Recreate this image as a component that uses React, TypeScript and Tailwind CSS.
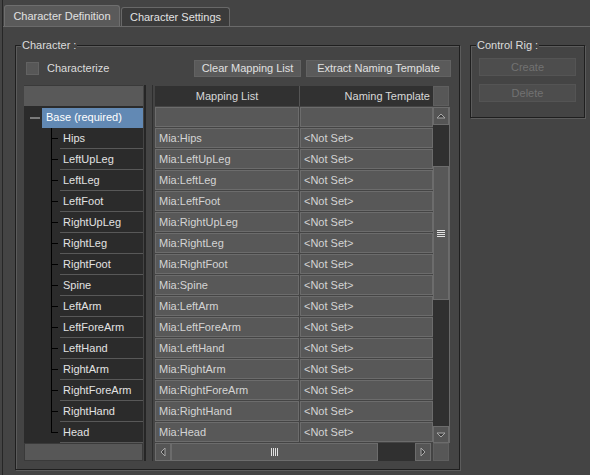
import React from "react";

const bones = [
  "Hips",
  "LeftUpLeg",
  "LeftLeg",
  "LeftFoot",
  "RightUpLeg",
  "RightLeg",
  "RightFoot",
  "Spine",
  "LeftArm",
  "LeftForeArm",
  "LeftHand",
  "RightArm",
  "RightForeArm",
  "RightHand",
  "Head",
];

function Arrow({ dir }: { dir: "up" | "down" | "left" | "right" }) {
  const pts = {
    up: "1,6 5,2 9,6",
    down: "1,2 5,6 9,2",
    left: "6,1 2,5 6,9",
    right: "2,1 6,5 2,9",
  }[dir];
  const vertical = dir === "up" || dir === "down";
  return (
    <svg width={vertical ? 10 : 8} height={vertical ? 8 : 10} viewBox={vertical ? "0 0 10 8" : "0 0 8 10"}>
      <polygon points={pts} fill="#3c3c3c" stroke="#a8a8a8" strokeWidth="1" />
    </svg>
  );
}

function Grip({ vertical }: { vertical?: boolean }) {
  return (
    <svg width={vertical ? 8 : 7} height={vertical ? 7 : 8}>
      {[0, 2, 4, 6].map((o) =>
        vertical ? (
          <rect key={o} x={0} y={o} width={8} height={1} fill="#e0e0e0" />
        ) : (
          <rect key={o} x={o} y={0} width={1} height={8} fill="#e0e0e0" />
        )
      )}
    </svg>
  );
}

function GroupBox({ label, className, children }: { label: string; className: string; children: React.ReactNode }) {
  return (
    <div className={`relative border border-[#1f1f1f] shadow-[inset_1px_1px_0_#5c5c5c,1px_1px_0_#5c5c5c] ${className}`}>
      <span className="absolute -top-[7px] left-[5px] bg-[#444] px-[1px] leading-[13px] text-[#dcdcdc]">{label}</span>
      {children}
    </div>
  );
}

export default function App() {
  return (
    <div className="w-[590px] h-[475px] overflow-hidden bg-[#444] font-['Liberation_Sans',Arial,sans-serif] text-[11px] text-[#d6d6d6]">
      <div className="ml-[2px] h-full border-l border-[#262626] flex flex-col">
        {/* Tabs */}
        <div className="h-[27px] flex items-end pl-[1px] border-b border-[#6a6a6a] shrink-0">
          <div className="w-[116px] h-[21px] bg-[#5a5a5a] border border-b-0 border-[#6e6e6e] rounded-t-[3px] flex items-center justify-center text-[#e2e2e2]">
            Character Definition
          </div>
          <div className="ml-[1px] w-[109px] h-[19px] bg-[#3b3b3b] border border-b-0 border-[#686868] rounded-t-[3px] flex items-center justify-center text-[#e2e2e2]">
            Character Settings
          </div>
        </div>

        <div className="flex items-start pt-[18px] pl-[12px]">
          {/* Character group */}
          <GroupBox label="Character :" className="w-[445px] h-[425px]">
            <div className="mt-[14px] h-[17px] flex items-center">
              <div className="ml-[10px] w-[13px] h-[13px] bg-[#575757] border border-[#626262]" />
              <span className="ml-[8px] text-[#dcdcdc]">Characterize</span>
              <div className="ml-auto w-[107px] h-[17px] bg-[#5a5a5a] border border-[#626262] flex items-center justify-center text-[#e0e0e0]">
                Clear Mapping List
              </div>
              <div className="ml-[5px] mr-[8px] w-[145px] h-[17px] bg-[#5a5a5a] border border-[#626262] flex items-center justify-center text-[#e0e0e0]">
                Extract Naming Template
              </div>
            </div>

            <div className="mt-[8px] ml-[8px] flex">
              {/* Tree */}
              <div className="w-[119px] flex flex-col bg-[#2b2b2b]">
                <div className="h-[22px] bg-[#595959] border-t border-[#3a3a3a] border-b border-b-[#2b2b2b]" />
                <div className="relative">
                  <div className="h-[21px] flex items-center">
                    <div className="w-[18px] flex justify-center">
                      <div className="ml-[4px] w-[10px] h-[2px] bg-[#7a7a7a]" />
                    </div>
                    <div className="flex-1 h-[20px] ml-[0px] bg-[#6289b4] flex items-center pl-[4px] text-white">
                      Base (required)
                    </div>
                  </div>
                  {bones.map((b, i) => (
                    <div key={b} className="h-[21px] flex">
                      <div className="w-[27px] relative">
                        <div
                          className={`absolute left-[27px] -translate-x-[0px] ${i === bones.length - 1 ? "h-[11px]" : "h-[21px]"} top-0 w-px bg-black`}
                          style={{ left: 27 }}
                        />
                        <div className="absolute top-[10px] left-[27px] w-[7px] h-px bg-black" />
                      </div>
                      <div className="ml-[9px] flex-1 border-b border-[#585858] flex items-center pl-[3px] text-[#e2e2e2]">
                        {b}
                      </div>
                    </div>
                  ))}
                </div>
                <div className="h-[18px] bg-[#575757] border border-[#3a3a3a]" />
              </div>

              {/* Splitter */}
              <div className="w-[9px] flex">
                <div className="ml-[1px] w-[2px] bg-[#262626]" />
              </div>

              {/* Table */}
              <div className="border-l border-[#2e2e2e] pl-[2px] flex flex-col">
                <div className="h-[22px] flex pt-[1px] pb-[1px]">
                  <div className="w-[144px] bg-[#313131] flex items-center justify-center text-[#d8d8d8]">Mapping List</div>
                  <div className="w-px bg-[#555]" />
                  <div className="w-[133px] bg-[#313131] flex items-center justify-end pr-[3px] text-[#d8d8d8]">
                    Naming Template
                  </div>
                  <div className="w-[16px] bg-[#575757] border border-[#5f5f5f]" />
                </div>
                <div className="flex border-r border-[#6a6a6a]">
                  <div className="w-[278px] flex flex-col">
                    {["", ...bones].map((b, i) => (
                      <div key={i} className="h-[21px] flex pb-px">
                        <div className="w-[144px] bg-[#585858] border border-[#6c6c6c] flex items-center pl-[3px] text-[#d4d4d4]">
                          {b ? `Mia:${b}` : ""}
                        </div>
                        <div className="w-px" />
                        <div className="w-[133px] bg-[#585858] border border-[#6c6c6c] flex items-center pl-[3px] text-[#d4d4d4]">
                          {b ? "<Not Set>" : ""}
                        </div>
                      </div>
                    ))}
                  </div>
                  <div className="w-[16px] flex flex-col">
                    <div className="h-[18px] bg-[#555] border border-[#6c6c6c] flex items-center justify-center">
                      <Arrow dir="up" />
                    </div>
                    <div className="h-[41px] bg-[#303030]" />
                    <div className="h-[134px] bg-[#585858] border border-[#6c6c6c] flex items-center justify-center">
                      <Grip vertical />
                    </div>
                    <div className="h-[126px] bg-[#303030]" />
                    <div className="h-[17px] bg-[#555] border border-[#6c6c6c] flex items-center justify-center">
                      <Arrow dir="down" />
                    </div>
                  </div>
                </div>
                <div className="h-[18px] flex">
                  <div className="w-[16px] bg-[#555] border border-[#6c6c6c] flex items-center justify-center">
                    <Arrow dir="left" />
                  </div>
                  <div className="w-[207px] bg-[#585858] border border-[#6c6c6c] flex items-center justify-center">
                    <Grip />
                  </div>
                  <div className="w-[37px] bg-[#303030]" />
                  <div className="w-[16px] bg-[#555] border border-[#6c6c6c] flex items-center justify-center">
                    <Arrow dir="right" />
                  </div>
                  <div className="w-[2px]" />
                  <div className="w-[16px] bg-[#575757] border border-[#5f5f5f]" />
                </div>
              </div>
            </div>
          </GroupBox>

          {/* Control Rig group */}
          <GroupBox label="Control Rig :" className="ml-[10px] w-[115px] h-[73px]">
            <div className="mt-[12px] ml-[8px] w-[97px] h-[18px] bg-[#4d4d4d] border border-[#545454] flex items-center justify-center text-[#727272]">
              Create
            </div>
            <div className="mt-[8px] ml-[8px] w-[97px] h-[18px] bg-[#4d4d4d] border border-[#545454] flex items-center justify-center text-[#727272]">
              Delete
            </div>
          </GroupBox>
        </div>
      </div>
    </div>
  );
}
